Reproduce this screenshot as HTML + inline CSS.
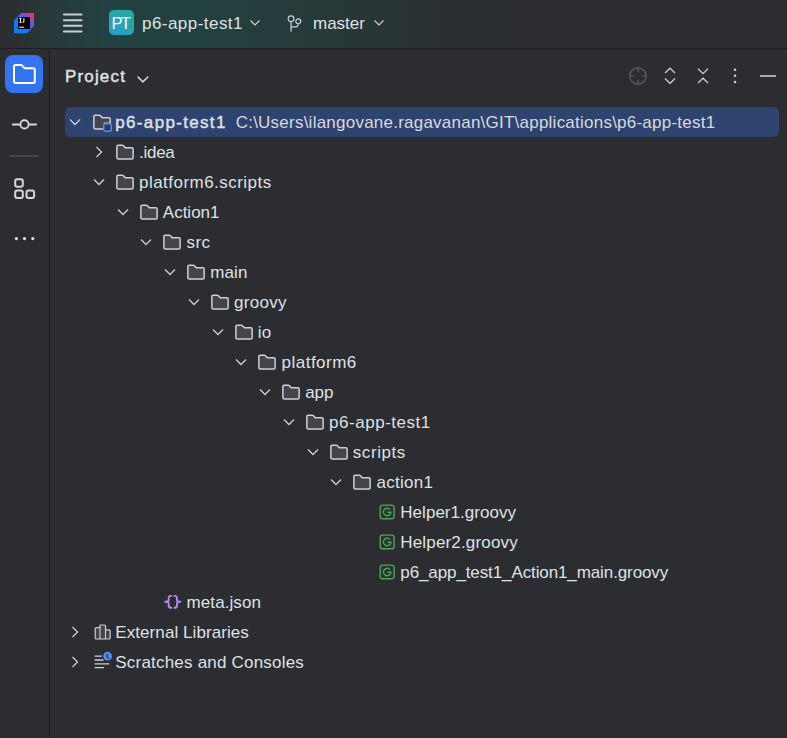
<!DOCTYPE html>
<html><head><meta charset="utf-8"><style>
*{margin:0;padding:0;box-sizing:border-box}
html,body{width:787px;height:738px;overflow:hidden;background:#2B2D30}
body{position:relative;font-family:"Liberation Sans",sans-serif;color:#DFE1E5}
.hdr{position:absolute;left:0;top:0;width:787px;height:48px;background:linear-gradient(90deg,#2B2D30 0px,#2a3133 20px,#283637 40px,#253c3c 65px,#224241 115px,#224241 150px,#234040 210px,#263b3a 300px,#283534 380px,#2a3032 450px,#2B2D30 510px)}
.hline{position:absolute;left:0;top:48px;width:787px;height:1px;background:#1E1F22}
.vline{position:absolute;left:49px;top:49px;width:1px;height:689px;background:#1E1F22}
.row{position:absolute;left:0;width:787px;height:30px}
.row.sel::before{content:"";position:absolute;left:65px;top:0;width:714px;height:30px;border-radius:5px;background:#2E436E}
.row svg{display:block;overflow:visible}
.t{position:absolute;top:0.8px;height:30px;line-height:30px;font-size:17px;white-space:pre;color:#DFE1E5}
.path{color:#D8DADE;margin-left:9px}
.a{position:absolute}
</style></head><body>
<div class="hdr"></div>
<div class="hline"></div>
<div class="vline"></div>
<!-- header items -->
<svg class="a" style="left:13px;top:12px" width="22" height="22" viewBox="0 0 22 22">
<defs><linearGradient id="lg" x1="0" y1="1" x2="1" y2="0"><stop offset="0.35" stop-color="#087CFA"/><stop offset="0.7" stop-color="#7A4FD0"/><stop offset="0.95" stop-color="#FE2857"/></linearGradient></defs>
<path d="M8.3 1H21V13.8L14.2 21.2H1V8.3Z" fill="url(#lg)"/>
<rect x="5" y="5" width="12" height="12" fill="#000"/>
<path d="M6.3 6.2H8.6M7.45 6.2V10.2M6.3 10.2H8.6M10.9 6.2V9.6C10.9 10.1 10.6 10.3 10.1 10.3H9.6" stroke="#fff" stroke-width="1.05" fill="none"/>
<rect x="6.2" y="14.7" width="5" height="1" fill="#fff"/>
</svg>
<svg class="a" style="left:62px;top:12px" width="22" height="22" viewBox="0 0 22 22"><path d="M1.9 2.6H19.6M1.9 8.2H19.6M1.9 13.8H19.6M1.9 19.4H19.6" stroke="#C9CBD0" stroke-width="2" stroke-linecap="round"/></svg>
<div class="a" style="left:109px;top:10px;width:25px;height:25px;border-radius:5px;background:linear-gradient(45deg,#2C9BD6,#27A992)"></div>
<div class="a" style="left:111.6px;top:10px;height:25px;line-height:26px;font-size:16.5px;letter-spacing:-1.9px;color:#fff;white-space:pre">PT</div>
<div class="a" style="left:142px;top:1px;height:46px;line-height:46px;font-size:17px;white-space:pre;letter-spacing:0.460px">p6-app-test1</div>
<svg class="a" style="left:245px;top:13px" width="20" height="20" viewBox="0 0 20 20"><path d="M5.5 7.5L10 12L14.5 7.5" fill="none" stroke="#CED0D6" stroke-width="1.2"/></svg>
<svg class="a" style="left:284px;top:12px" width="22" height="22" viewBox="0 0 22 22"><circle cx="7.05" cy="6.7" r="2.85" fill="none" stroke="#CED0D6" stroke-width="1.2"/><circle cx="14.25" cy="9.3" r="2.45" fill="none" stroke="#CED0D6" stroke-width="1.2"/><path d="M7.05 9.55V19.7M14.25 11.75V12.3C14.25 13.9 13.2 14.8 11.6 14.8H7.05" fill="none" stroke="#CED0D6" stroke-width="1.2"/></svg>
<div class="a" style="left:313px;top:1px;height:46px;line-height:46px;font-size:17px;white-space:pre;letter-spacing:0.000px">master</div>
<svg class="a" style="left:369px;top:13px" width="20" height="20" viewBox="0 0 20 20"><path d="M5.5 7.5L10 12L14.5 7.5" fill="none" stroke="#CED0D6" stroke-width="1.2"/></svg>
<!-- stripe -->
<div class="a" style="left:5px;top:55px;width:38px;height:38px;border-radius:8px;background:#3574F0"></div>
<svg class="a" style="left:12px;top:62px" width="25" height="25" viewBox="0 0 25 25"><path d="M2 4.5C2 3.4 2.6 2.9 3.6 2.9H9.4L12.6 6.3H21.2C22.3 6.3 22.8 6.9 22.8 7.9V19.3C22.8 20.3 22.3 20.9 21.2 20.9H3.6C2.6 20.9 2 20.3 2 19.3Z" fill="none" stroke="#fff" stroke-width="2"/></svg>
<svg class="a" style="left:10px;top:112px" width="30" height="25" viewBox="0 0 30 25"><path d="M2.9 12.4H9.5M19.5 12.4H26.1" stroke="#D5D7DB" stroke-width="2" stroke-linecap="round"/><circle cx="14.5" cy="12.4" r="4.1" fill="none" stroke="#D5D7DB" stroke-width="1.9"/></svg>
<div class="a" style="left:9px;top:155px;width:30px;height:2px;background:#43454A"></div>
<svg class="a" style="left:12px;top:176px" width="25" height="25" viewBox="0 0 25 25"><rect x="3.2" y="3.2" width="7.6" height="7.6" rx="2" fill="none" stroke="#D5D7DB" stroke-width="2"/><rect x="3.2" y="14.4" width="7.6" height="7.6" rx="2" fill="none" stroke="#D5D7DB" stroke-width="2"/><rect x="14.5" y="14.4" width="7.6" height="7.6" rx="2" fill="none" stroke="#D5D7DB" stroke-width="2"/></svg>
<svg class="a" style="left:10px;top:230px" width="30" height="18" viewBox="0 0 30 18"><circle cx="6.4" cy="8.6" r="1.6" fill="#DFE1E5"/><circle cx="14.5" cy="8.6" r="1.6" fill="#DFE1E5"/><circle cx="22.8" cy="8.6" r="1.6" fill="#DFE1E5"/></svg>
<!-- title -->
<div class="a" style="left:65px;top:61.7px;height:30px;line-height:30px;font-size:17px;font-weight:400;-webkit-text-stroke:0.45px #DFE1E5;white-space:pre;letter-spacing:1.160px">Project</div>
<svg class="a" style="left:132px;top:69px" width="20" height="20" viewBox="0 0 20 20"><path d="M5.6 7.6L10.9 12.9L16.2 7.6" fill="none" stroke="#CED0D6" stroke-width="1.5"/></svg>
<!-- toolbar icons -->
<svg class="a" style="left:628px;top:66px" width="20" height="20" viewBox="0 0 20 20"><circle cx="10" cy="10" r="8.2" fill="none" stroke="#5E6166" stroke-width="1.2"/><path d="M10 1.8V6.5M10 13.5V18.2M1.8 10H6.5M13.5 10H18.2" stroke="#5E6166" stroke-width="1.2"/></svg>
<svg class="a" style="left:660px;top:66px" width="20" height="20" viewBox="0 0 20 20"><path d="M5 7L10 2.2L15 7M5 12.5L10 17.3L15 12.5" fill="none" stroke="#CED0D6" stroke-width="1.2"/></svg>
<svg class="a" style="left:693px;top:66px" width="20" height="20" viewBox="0 0 20 20"><path d="M5 2.8L10 7.6L15 2.8M5 17L10 12.2L15 17" fill="none" stroke="#CED0D6" stroke-width="1.2"/></svg>
<svg class="a" style="left:725px;top:66px" width="20" height="20" viewBox="0 0 20 20"><circle cx="10" cy="3.8" r="1.25" fill="#CED0D6"/><circle cx="10" cy="9.7" r="1.25" fill="#CED0D6"/><circle cx="10" cy="16.1" r="1.25" fill="#CED0D6"/></svg>
<div class="a" style="left:760px;top:75px;width:16px;height:2px;background:#A8ABB0"></div>
<!-- tree -->
<div class="row sel" style="top:107px"><div style="position:absolute;left:65.00px;top:5px"><svg class="chev" width="20" height="20" viewBox="0 0 20 20"><path d="M5 7.5L10 12.5L15 7.5" fill="none" stroke="#CED0D6" stroke-width="1.25"/></svg></div><div style="position:absolute;left:92.00px;top:5px"><svg class="ic" width="20" height="20" viewBox="0 0 16 16"><path d="M1.5 3.5C1.5 2.95 1.95 2.5 2.5 2.5H5.8C6.1 2.5 6.35 2.62 6.55 2.83L8.1 4.5H13.5C14.05 4.5 14.5 4.95 14.5 5.5V9H10V13.5H2.5C1.95 13.5 1.5 13.05 1.5 12.5V3.5Z" fill="#43454A" stroke="#CED0D6" stroke-width="1.2"/><rect x="9.4" y="9.4" width="6" height="6" rx="1.3" fill="#2B3D63" stroke="#548AF7" stroke-width="1.15"/></svg></div><span class="t" style="left:115.30px"><span style="-webkit-text-stroke:0.45px #DFE1E5;letter-spacing:1.327px">p6-app-test1</span><span class="path" style="letter-spacing:0.234px">C:\Users\ilangovane.ragavanan\GIT\applications\p6-app-test1</span></span></div>
<div class="row" style="top:137px"><div style="position:absolute;left:88.75px;top:5px"><svg class="chev" width="20" height="20" viewBox="0 0 20 20"><path d="M7.5 5L12.5 10L7.5 15" fill="none" stroke="#CED0D6" stroke-width="1.25"/></svg></div><div style="position:absolute;left:114.75px;top:5px"><svg class="ic" width="20" height="20" viewBox="0 0 16 16"><path d="M1.5 3.5C1.5 2.95 1.95 2.5 2.5 2.5H5.8C6.1 2.5 6.35 2.62 6.55 2.83L8.1 4.5H13.5C14.05 4.5 14.5 4.95 14.5 5.5V12.5C14.5 13.05 14.05 13.5 13.5 13.5H2.5C1.95 13.5 1.5 13.05 1.5 12.5V3.5Z" fill="#43454A" stroke="#CED0D6" stroke-width="1.2"/></svg></div><span class="t" style="left:139.05px"><span style="letter-spacing:-0.275px">.idea</span></span></div>
<div class="row" style="top:167px"><div style="position:absolute;left:88.75px;top:5px"><svg class="chev" width="20" height="20" viewBox="0 0 20 20"><path d="M5 7.5L10 12.5L15 7.5" fill="none" stroke="#CED0D6" stroke-width="1.25"/></svg></div><div style="position:absolute;left:114.75px;top:5px"><svg class="ic" width="20" height="20" viewBox="0 0 16 16"><path d="M1.5 3.5C1.5 2.95 1.95 2.5 2.5 2.5H5.8C6.1 2.5 6.35 2.62 6.55 2.83L8.1 4.5H13.5C14.05 4.5 14.5 4.95 14.5 5.5V12.5C14.5 13.05 14.05 13.5 13.5 13.5H2.5C1.95 13.5 1.5 13.05 1.5 12.5V3.5Z" fill="#43454A" stroke="#CED0D6" stroke-width="1.2"/></svg></div><span class="t" style="left:139.05px"><span style="letter-spacing:0.463px">platform6.scripts</span></span></div>
<div class="row" style="top:197px"><div style="position:absolute;left:112.50px;top:5px"><svg class="chev" width="20" height="20" viewBox="0 0 20 20"><path d="M5 7.5L10 12.5L15 7.5" fill="none" stroke="#CED0D6" stroke-width="1.25"/></svg></div><div style="position:absolute;left:138.50px;top:5px"><svg class="ic" width="20" height="20" viewBox="0 0 16 16"><path d="M1.5 3.5C1.5 2.95 1.95 2.5 2.5 2.5H5.8C6.1 2.5 6.35 2.62 6.55 2.83L8.1 4.5H13.5C14.05 4.5 14.5 4.95 14.5 5.5V12.5C14.5 13.05 14.05 13.5 13.5 13.5H2.5C1.95 13.5 1.5 13.05 1.5 12.5V3.5Z" fill="#43454A" stroke="#CED0D6" stroke-width="1.2"/></svg></div><span class="t" style="left:162.80px"><span style="letter-spacing:0.000px">Action1</span></span></div>
<div class="row" style="top:227px"><div style="position:absolute;left:136.25px;top:5px"><svg class="chev" width="20" height="20" viewBox="0 0 20 20"><path d="M5 7.5L10 12.5L15 7.5" fill="none" stroke="#CED0D6" stroke-width="1.25"/></svg></div><div style="position:absolute;left:162.25px;top:5px"><svg class="ic" width="20" height="20" viewBox="0 0 16 16"><path d="M1.5 3.5C1.5 2.95 1.95 2.5 2.5 2.5H5.8C6.1 2.5 6.35 2.62 6.55 2.83L8.1 4.5H13.5C14.05 4.5 14.5 4.95 14.5 5.5V12.5C14.5 13.05 14.05 13.5 13.5 13.5H2.5C1.95 13.5 1.5 13.05 1.5 12.5V3.5Z" fill="#43454A" stroke="#CED0D6" stroke-width="1.2"/></svg></div><span class="t" style="left:186.55px"><span style="letter-spacing:0.350px">src</span></span></div>
<div class="row" style="top:257px"><div style="position:absolute;left:160.00px;top:5px"><svg class="chev" width="20" height="20" viewBox="0 0 20 20"><path d="M5 7.5L10 12.5L15 7.5" fill="none" stroke="#CED0D6" stroke-width="1.25"/></svg></div><div style="position:absolute;left:186.00px;top:5px"><svg class="ic" width="20" height="20" viewBox="0 0 16 16"><path d="M1.5 3.5C1.5 2.95 1.95 2.5 2.5 2.5H5.8C6.1 2.5 6.35 2.62 6.55 2.83L8.1 4.5H13.5C14.05 4.5 14.5 4.95 14.5 5.5V12.5C14.5 13.05 14.05 13.5 13.5 13.5H2.5C1.95 13.5 1.5 13.05 1.5 12.5V3.5Z" fill="#43454A" stroke="#CED0D6" stroke-width="1.2"/></svg></div><span class="t" style="left:210.30px"><span style="letter-spacing:0.100px">main</span></span></div>
<div class="row" style="top:287px"><div style="position:absolute;left:183.75px;top:5px"><svg class="chev" width="20" height="20" viewBox="0 0 20 20"><path d="M5 7.5L10 12.5L15 7.5" fill="none" stroke="#CED0D6" stroke-width="1.25"/></svg></div><div style="position:absolute;left:209.75px;top:5px"><svg class="ic" width="20" height="20" viewBox="0 0 16 16"><path d="M1.5 3.5C1.5 2.95 1.95 2.5 2.5 2.5H5.8C6.1 2.5 6.35 2.62 6.55 2.83L8.1 4.5H13.5C14.05 4.5 14.5 4.95 14.5 5.5V12.5C14.5 13.05 14.05 13.5 13.5 13.5H2.5C1.95 13.5 1.5 13.05 1.5 12.5V3.5Z" fill="#43454A" stroke="#CED0D6" stroke-width="1.2"/></svg></div><span class="t" style="left:234.05px"><span style="letter-spacing:0.300px">groovy</span></span></div>
<div class="row" style="top:317px"><div style="position:absolute;left:207.50px;top:5px"><svg class="chev" width="20" height="20" viewBox="0 0 20 20"><path d="M5 7.5L10 12.5L15 7.5" fill="none" stroke="#CED0D6" stroke-width="1.25"/></svg></div><div style="position:absolute;left:233.50px;top:5px"><svg class="ic" width="20" height="20" viewBox="0 0 16 16"><path d="M1.5 3.5C1.5 2.95 1.95 2.5 2.5 2.5H5.8C6.1 2.5 6.35 2.62 6.55 2.83L8.1 4.5H13.5C14.05 4.5 14.5 4.95 14.5 5.5V12.5C14.5 13.05 14.05 13.5 13.5 13.5H2.5C1.95 13.5 1.5 13.05 1.5 12.5V3.5Z" fill="#43454A" stroke="#CED0D6" stroke-width="1.2"/></svg></div><span class="t" style="left:257.80px"><span style="letter-spacing:0.300px">io</span></span></div>
<div class="row" style="top:347px"><div style="position:absolute;left:231.25px;top:5px"><svg class="chev" width="20" height="20" viewBox="0 0 20 20"><path d="M5 7.5L10 12.5L15 7.5" fill="none" stroke="#CED0D6" stroke-width="1.25"/></svg></div><div style="position:absolute;left:257.25px;top:5px"><svg class="ic" width="20" height="20" viewBox="0 0 16 16"><path d="M1.5 3.5C1.5 2.95 1.95 2.5 2.5 2.5H5.8C6.1 2.5 6.35 2.62 6.55 2.83L8.1 4.5H13.5C14.05 4.5 14.5 4.95 14.5 5.5V12.5C14.5 13.05 14.05 13.5 13.5 13.5H2.5C1.95 13.5 1.5 13.05 1.5 12.5V3.5Z" fill="#43454A" stroke="#CED0D6" stroke-width="1.2"/></svg></div><span class="t" style="left:281.55px"><span style="letter-spacing:0.487px">platform6</span></span></div>
<div class="row" style="top:377px"><div style="position:absolute;left:255.00px;top:5px"><svg class="chev" width="20" height="20" viewBox="0 0 20 20"><path d="M5 7.5L10 12.5L15 7.5" fill="none" stroke="#CED0D6" stroke-width="1.25"/></svg></div><div style="position:absolute;left:281.00px;top:5px"><svg class="ic" width="20" height="20" viewBox="0 0 16 16"><path d="M1.5 3.5C1.5 2.95 1.95 2.5 2.5 2.5H5.8C6.1 2.5 6.35 2.62 6.55 2.83L8.1 4.5H13.5C14.05 4.5 14.5 4.95 14.5 5.5V12.5C14.5 13.05 14.05 13.5 13.5 13.5H2.5C1.95 13.5 1.5 13.05 1.5 12.5V3.5Z" fill="#43454A" stroke="#CED0D6" stroke-width="1.2"/></svg></div><span class="t" style="left:305.30px"><span style="letter-spacing:-0.150px">app</span></span></div>
<div class="row" style="top:407px"><div style="position:absolute;left:278.75px;top:5px"><svg class="chev" width="20" height="20" viewBox="0 0 20 20"><path d="M5 7.5L10 12.5L15 7.5" fill="none" stroke="#CED0D6" stroke-width="1.25"/></svg></div><div style="position:absolute;left:304.75px;top:5px"><svg class="ic" width="20" height="20" viewBox="0 0 16 16"><path d="M1.5 3.5C1.5 2.95 1.95 2.5 2.5 2.5H5.8C6.1 2.5 6.35 2.62 6.55 2.83L8.1 4.5H13.5C14.05 4.5 14.5 4.95 14.5 5.5V12.5C14.5 13.05 14.05 13.5 13.5 13.5H2.5C1.95 13.5 1.5 13.05 1.5 12.5V3.5Z" fill="#43454A" stroke="#CED0D6" stroke-width="1.2"/></svg></div><span class="t" style="left:329.05px"><span style="letter-spacing:0.527px">p6-app-test1</span></span></div>
<div class="row" style="top:437px"><div style="position:absolute;left:302.50px;top:5px"><svg class="chev" width="20" height="20" viewBox="0 0 20 20"><path d="M5 7.5L10 12.5L15 7.5" fill="none" stroke="#CED0D6" stroke-width="1.25"/></svg></div><div style="position:absolute;left:328.50px;top:5px"><svg class="ic" width="20" height="20" viewBox="0 0 16 16"><path d="M1.5 3.5C1.5 2.95 1.95 2.5 2.5 2.5H5.8C6.1 2.5 6.35 2.62 6.55 2.83L8.1 4.5H13.5C14.05 4.5 14.5 4.95 14.5 5.5V12.5C14.5 13.05 14.05 13.5 13.5 13.5H2.5C1.95 13.5 1.5 13.05 1.5 12.5V3.5Z" fill="#43454A" stroke="#CED0D6" stroke-width="1.2"/></svg></div><span class="t" style="left:352.80px"><span style="letter-spacing:0.567px">scripts</span></span></div>
<div class="row" style="top:467px"><div style="position:absolute;left:326.25px;top:5px"><svg class="chev" width="20" height="20" viewBox="0 0 20 20"><path d="M5 7.5L10 12.5L15 7.5" fill="none" stroke="#CED0D6" stroke-width="1.25"/></svg></div><div style="position:absolute;left:352.25px;top:5px"><svg class="ic" width="20" height="20" viewBox="0 0 16 16"><path d="M1.5 3.5C1.5 2.95 1.95 2.5 2.5 2.5H5.8C6.1 2.5 6.35 2.62 6.55 2.83L8.1 4.5H13.5C14.05 4.5 14.5 4.95 14.5 5.5V12.5C14.5 13.05 14.05 13.5 13.5 13.5H2.5C1.95 13.5 1.5 13.05 1.5 12.5V3.5Z" fill="#43454A" stroke="#CED0D6" stroke-width="1.2"/></svg></div><span class="t" style="left:376.55px"><span style="letter-spacing:0.267px">action1</span></span></div>
<div class="row" style="top:497px"><div style="position:absolute;left:376.00px;top:5px"><svg class="ic" width="20" height="20" viewBox="0 0 20 20"><rect x="4.2" y="3.1" width="13.9" height="13.6" rx="2.3" fill="#26362A" stroke="#55A05C" stroke-width="1.4"/><path d="M14.05 7.5A3.75 3.75 0 1 0 14.95 10.2H11.5" fill="none" stroke="#55A05C" stroke-width="1.35"/></svg></div><span class="t" style="left:400.30px"><span style="letter-spacing:0.031px">Helper1.groovy</span></span></div>
<div class="row" style="top:527px"><div style="position:absolute;left:376.00px;top:5px"><svg class="ic" width="20" height="20" viewBox="0 0 20 20"><rect x="4.2" y="3.1" width="13.9" height="13.6" rx="2.3" fill="#26362A" stroke="#55A05C" stroke-width="1.4"/><path d="M14.05 7.5A3.75 3.75 0 1 0 14.95 10.2H11.5" fill="none" stroke="#55A05C" stroke-width="1.35"/></svg></div><span class="t" style="left:400.30px"><span style="letter-spacing:0.162px">Helper2.groovy</span></span></div>
<div class="row" style="top:557px"><div style="position:absolute;left:376.00px;top:5px"><svg class="ic" width="20" height="20" viewBox="0 0 20 20"><rect x="4.2" y="3.1" width="13.9" height="13.6" rx="2.3" fill="#26362A" stroke="#55A05C" stroke-width="1.4"/><path d="M14.05 7.5A3.75 3.75 0 1 0 14.95 10.2H11.5" fill="none" stroke="#55A05C" stroke-width="1.35"/></svg></div><span class="t" style="left:400.30px"><span style="letter-spacing:-0.106px">p6_app_test1_Action1_main.groovy</span></span></div>
<div class="row" style="top:587px"><div style="position:absolute;left:162.25px;top:5px"><svg class="ic" width="20" height="20" viewBox="0 0 20 20"><path d="M10 3.9H9.1Q6.65 3.9 6.65 6.3V8Q6.65 9.7 3.2 9.7Q6.65 9.7 6.65 11.4V13.4Q6.65 15.8 9.1 15.8H10M11.6 3.9H12.5Q14.95 3.9 14.95 6.3V8Q14.95 9.7 18.4 9.7Q14.95 9.7 14.95 11.4V13.4Q14.95 15.8 12.5 15.8H11.6" fill="none" stroke="#B589F5" stroke-width="1.9" stroke-linejoin="round"/></svg></div><span class="t" style="left:186.55px"><span style="letter-spacing:0.087px">meta.json</span></span></div>
<div class="row" style="top:617px"><div style="position:absolute;left:65.00px;top:5px"><svg class="chev" width="20" height="20" viewBox="0 0 20 20"><path d="M7.5 5L12.5 10L7.5 15" fill="none" stroke="#CED0D6" stroke-width="1.25"/></svg></div><div style="position:absolute;left:91.00px;top:5px"><svg class="ic" width="20" height="20" viewBox="0 0 20 20"><path d="M4.2 16V6.8Q4.2 5.7 5.3 5.7H9V4.1Q9 3 10.1 3H13.4Q14.5 3 14.5 4.1V7.9H18Q19.1 7.9 19.1 9V15.9Q19.1 17 18 17H5.3Q4.2 17 4.2 15.9Z" fill="#43454A" stroke="#CED0D6" stroke-width="1.2"/><path d="M9 5.7V17M14.5 7.9V17" stroke="#CED0D6" stroke-width="1.1"/></svg></div><span class="t" style="left:115.30px"><span style="letter-spacing:0.076px">External Libraries</span></span></div>
<div class="row" style="top:647px"><div style="position:absolute;left:65.00px;top:5px"><svg class="chev" width="20" height="20" viewBox="0 0 20 20"><path d="M7.5 5L12.5 10L7.5 15" fill="none" stroke="#CED0D6" stroke-width="1.25"/></svg></div><div style="position:absolute;left:91.00px;top:5px"><svg class="ic" width="20" height="20" viewBox="0 0 20 20"><path d="M3.6 4.2H10.9M3.6 8H12.7M3.6 11.9H18.2M3.6 15.7H13" stroke="#CED0D6" stroke-width="1.3"/><circle cx="16.6" cy="4.2" r="5.4" fill="#2B2D30"/><circle cx="16.6" cy="4.2" r="4.4" fill="#548AF7"/><path d="M16.1 1.8V4.9L17.6 6.6" fill="none" stroke="#1E1F22" stroke-width="1.1"/></svg></div><span class="t" style="left:115.30px"><span style="letter-spacing:0.205px">Scratches and Consoles</span></span></div>
</body></html>
